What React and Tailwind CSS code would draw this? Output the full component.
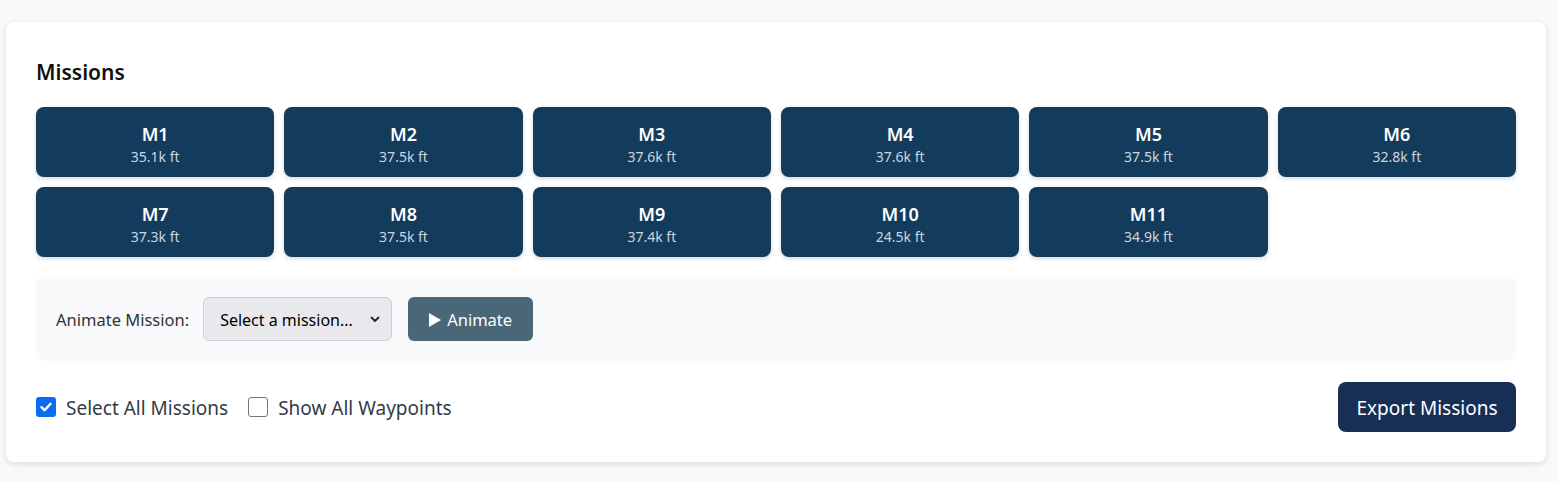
const missions = [
  { id: 'M1', alt: '35.1k ft' },
  { id: 'M2', alt: '37.5k ft' },
  { id: 'M3', alt: '37.6k ft' },
  { id: 'M4', alt: '37.6k ft' },
  { id: 'M5', alt: '37.5k ft' },
  { id: 'M6', alt: '32.8k ft' },
  { id: 'M7', alt: '37.3k ft' },
  { id: 'M8', alt: '37.5k ft' },
  { id: 'M9', alt: '37.4k ft' },
  { id: 'M10', alt: '24.5k ft' },
  { id: 'M11', alt: '34.9k ft' },
];

export default function App() {
  return (
    <div className="min-h-screen bg-[#f8f9fb] pl-[6px] pr-[12px] pt-[22px] pb-5 font-['Noto_Sans',sans-serif]">
      <div className="bg-white rounded-lg shadow-[0_2px_6px_rgba(0,0,0,0.12)] p-[30px]">
        <h2 className="mt-[5px] mb-[20px] text-[21px] leading-[30px] font-semibold text-[#111]">Missions</h2>

        {/* Mission tiles */}
        <div className="grid grid-cols-6 gap-[10px]">
          {missions.map((m) => (
            <button
              key={m.id}
              className="h-[70px] pt-[4px] rounded-lg bg-[#133b5c] text-white flex flex-col items-center justify-center shadow-[0_2px_4px_rgba(0,0,0,0.15)]"
            >
              <span className="text-[18px] leading-[26px] font-semibold">{m.id}</span>
              <span className="text-[14px] leading-5 text-[#cdd5df]">{m.alt}</span>
            </button>
          ))}
        </div>

        {/* Animate panel */}
        <div className="mt-[20px] h-[84px] rounded-lg bg-[#f8f9fa] px-[20px] flex items-center">
          <span className="pt-[2px] text-[16.5px] text-[#333]">Animate Mission:</span>
          <div className="ml-[14px] h-[44px] w-[189px] rounded-md border border-[#cfcfd4] bg-[#e9e9ed] flex items-center justify-between pl-[16px] pr-[10px]">
            <span className="pt-[2px] text-[16px] text-black">Select a mission...</span>
            <svg width="12" height="12" viewBox="0 0 12 12" fill="none" stroke="#222" strokeWidth="1.8" strokeLinecap="round" strokeLinejoin="round">
              <path d="M2.5 4.5 6 8l3.5-3.5" />
            </svg>
          </div>
          <button className="ml-[16px] h-[44px] w-[125px] pt-[2px] rounded-md bg-[#4a6778] text-white text-[16.5px] flex items-center justify-center gap-[6px]">
            <svg width="12" height="14" viewBox="0 0 12 14" fill="#fff"><path d="M0 0 12 7 0 14z" /></svg>
            Animate
          </button>
        </div>

        {/* Footer row */}
        <div className="mt-[21px] flex items-center justify-between">
          <div className="flex items-center">
            <label className="flex items-center gap-[10px]">
              <span className="w-[20px] h-[20px] rounded-[3px] bg-[#0b6cf0] flex items-center justify-center">
                <svg width="14" height="14" viewBox="0 0 14 14" fill="none" stroke="#fff" strokeWidth="2.4" strokeLinecap="round" strokeLinejoin="round">
                  <path d="M2.5 7.2 5.6 10.2 11.5 3.8" />
                </svg>
              </span>
              <span className="pt-[3px] text-[19px] text-[#333b47]">Select All Missions</span>
            </label>
            <label className="ml-[20px] flex items-center gap-[10px]">
              <span className="w-[20px] h-[20px] rounded-[3px] border border-[#767676] bg-white" />
              <span className="pt-[3px] text-[19px] text-[#333b47]">Show All Waypoints</span>
            </label>
          </div>
          <button className="h-[50px] w-[178px] pt-[3px] rounded-lg bg-[#172e55] text-white text-[19px]">Export Missions</button>
        </div>
      </div>
    </div>
  );
}
